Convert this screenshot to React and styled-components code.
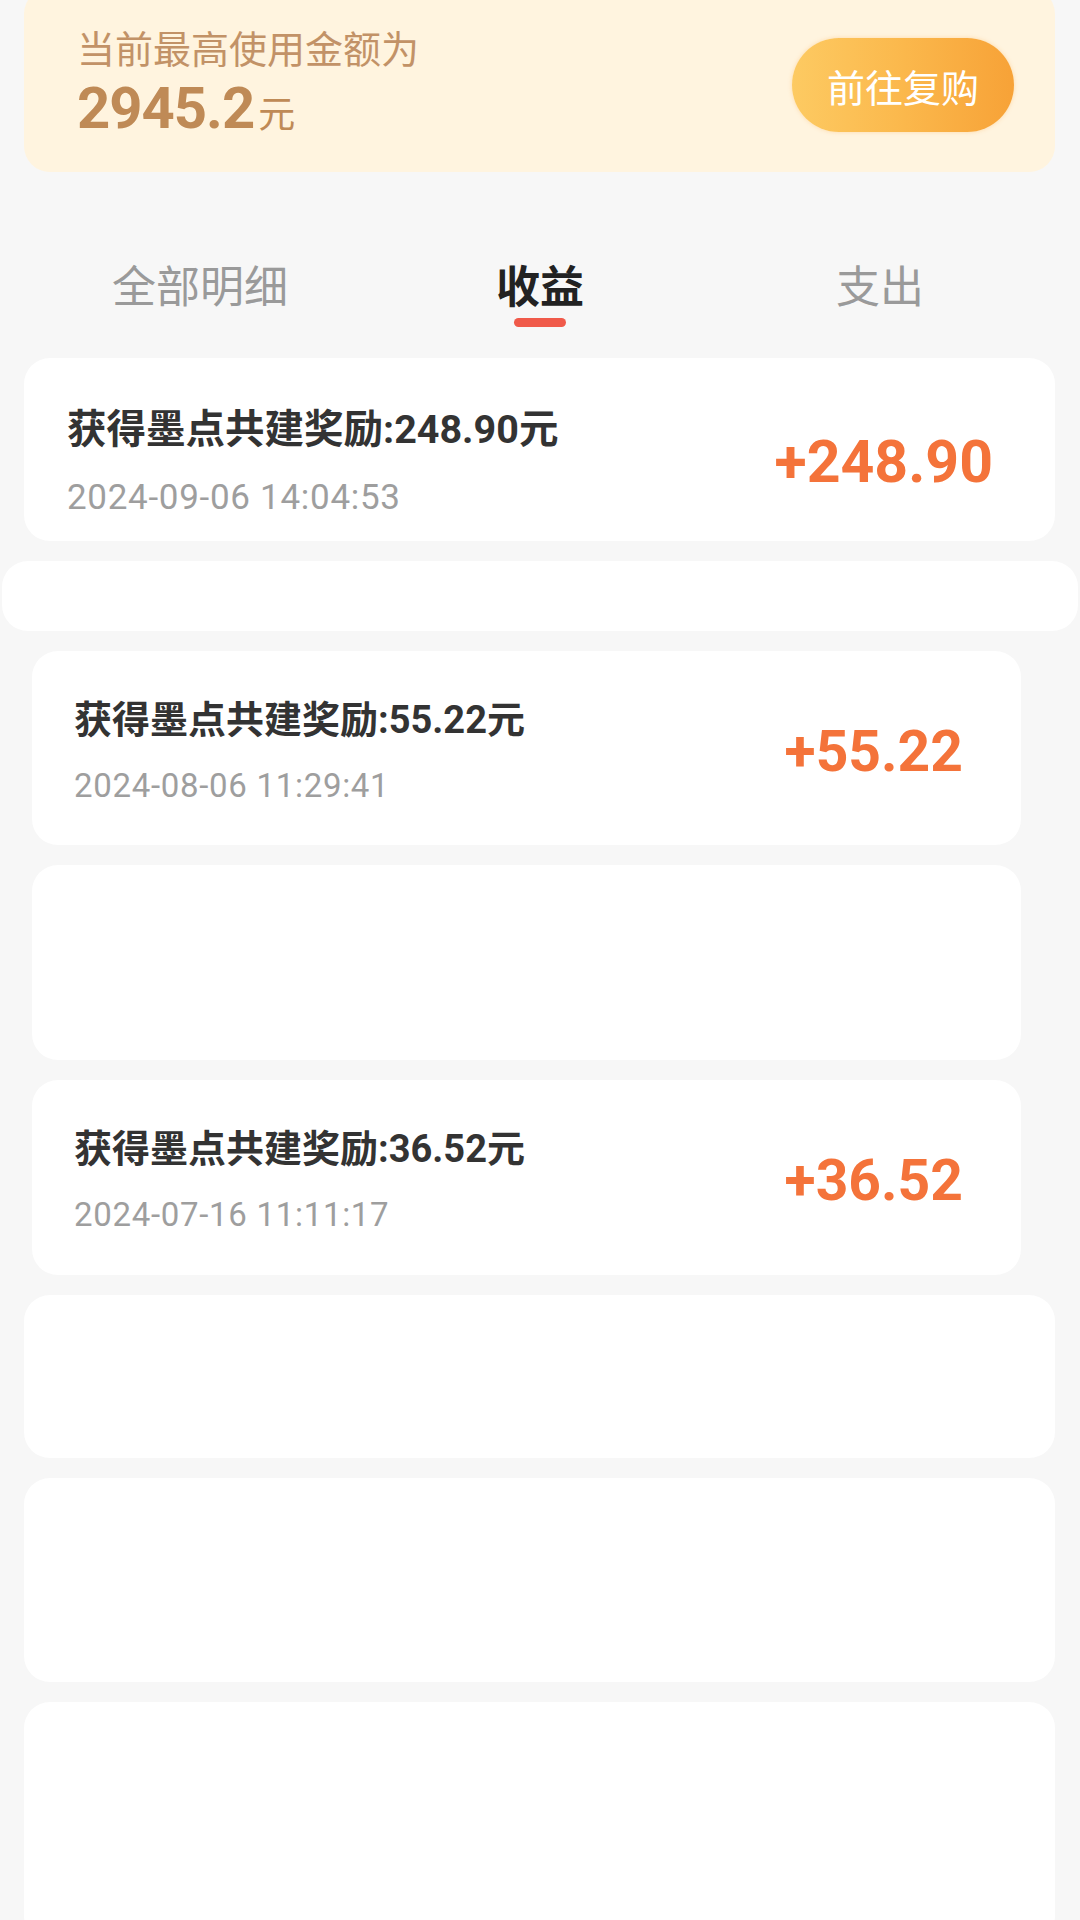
import styled, { createGlobalStyle } from "styled-components";

const GlobalStyle = createGlobalStyle`
	html, body {
		margin: 0;
		padding: 0;
		background: #f7f7f7;
	}
	body {
		width: 1080px;
		min-height: 1920px;
		overflow: hidden;
		font-family: Roboto, "Noto Sans CJK SC", sans-serif;
	}
`;

const Page = styled.div`
	width: 1080px;
	height: 1920px;
	overflow: hidden;
	background: #f7f7f7;
`;

const Banner = styled.div`
	margin: -12px 25px 0 24px;
	height: 184px;
	box-sizing: border-box;
	padding: 0 41px 0 53px;
	background: #fff4df;
	border-radius: 26px;
	display: flex;
	align-items: flex-start;
	justify-content: space-between;
`;

const Quota = styled.div`
	display: flex;
	flex-direction: column;
	margin-top: 36px;
	color: #c29267;
`;

const QuotaLabel = styled.div`
	font-family: "Noto Sans CJK SC", sans-serif;
	font-size: 38px;
	line-height: 46px;
`;

const QuotaValue = styled.div`
	display: flex;
	align-items: baseline;
	margin-top: 5px;
	color: #bf8a56;
	font-size: 58px;
	font-weight: 700;
	line-height: 66px;
	letter-spacing: -1px;
`;

const Unit = styled.span`
	font-family: "Noto Sans CJK SC", sans-serif;
	font-size: 37px;
	font-weight: 400;
	margin-left: 4px;
`;

const RebuyButton = styled.button`
	width: 222px;
	height: 94px;
	margin-top: 50px;
	border: none;
	border-radius: 47px;
	background: linear-gradient(90deg, #fdca62 0%, #fbb84c 50%, #f7a237 100%);
	box-shadow: 0 0 4px rgba(248, 170, 70, 0.35);
	color: #fff;
	font-family: "Noto Sans CJK SC", sans-serif;
	font-size: 38px;
	padding: 0;
`;

const Tabs = styled.div`
	display: flex;
	padding: 86px 30px 0;
`;

const Tab = styled.div`
	flex: 1;
	display: flex;
	flex-direction: column;
	align-items: center;
	font-family: "Noto Sans CJK SC", sans-serif;
	font-size: 44px;
	line-height: 52px;
	color: ${(p) => (p.$active ? "#222" : "#9a9a9a")};
	font-weight: ${(p) => (p.$active ? 700 : 400)};
`;

const Underline = styled.span`
	width: 52px;
	height: 9px;
	margin-top: 8px;
	border-radius: 5px;
	background: ${(p) => (p.$show ? "#f05a4a" : "transparent")};
`;

const List = styled.div`
	display: flex;
	flex-direction: column;
	gap: 20px;
	margin-top: 31px;
`;

const Card = styled.div`
	margin: 0 ${(p) => p.$right}px 0 ${(p) => p.$left}px;
	height: ${(p) => p.$h}px;
	background: #fff;
	border-radius: 26px;
	overflow: hidden;
`;

const Row = styled.div`
	height: ${(p) => p.$rowH}px;
	box-sizing: border-box;
	padding: 0 ${(p) => p.$padR}px 0 ${(p) => p.$padL}px;
	display: flex;
	align-items: center;
	justify-content: space-between;
`;

const Info = styled.div`
	display: flex;
	flex-direction: column;
	gap: ${(p) => p.$gap}px;
`;

const Title = styled.div`
	font-size: ${(p) => p.$size}px;
	line-height: ${(p) => Math.round(p.$size + 8)}px;
	font-weight: 700;
	color: #333;
`;

const Time = styled.div`
	font-size: ${(p) => p.$size}px;
	line-height: ${(p) => p.$size + 6}px;
	letter-spacing: 0.7px;
	color: #9e9e9e;
`;

const Amount = styled.div`
	font-size: ${(p) => p.$size}px;
	font-weight: 700;
	color: #f4733a;
`;

const big = { title: 39.5, time: 35, amount: 59, gap: 23, padL: 43, padR: 62 };
const small = { title: 38, time: 33, amount: 57, gap: 23, padL: 42, padR: 58 };

const cards = [
	{ id: 1, left: 24, right: 25, h: 183, rowH: 207, size: big, title: "获得墨点共建奖励:248.90元", time: "2024-09-06 14:04:53", amount: "+248.90" },
	{ id: 2, left: 2, right: 2, h: 70 },
	{ id: 3, left: 32, right: 59, h: 194, rowH: 200, size: small, title: "获得墨点共建奖励:55.22元", time: "2024-08-06 11:29:41", amount: "+55.22" },
	{ id: 4, left: 32, right: 59, h: 195 },
	{ id: 5, left: 32, right: 59, h: 195, rowH: 200, size: small, title: "获得墨点共建奖励:36.52元", time: "2024-07-16 11:11:17", amount: "+36.52" },
	{ id: 6, left: 24, right: 25, h: 163 },
	{ id: 7, left: 24, right: 25, h: 204 },
	{ id: 8, left: 24, right: 25, h: 240 },
];

function RecordCard({ card }) {
	const { left, right, h, rowH, size, title, time, amount } = card;
	return (
		<Card $left={left} $right={right} $h={h}>
			{title && (
				<Row $rowH={rowH} $padL={size.padL} $padR={size.padR}>
					<Info $gap={size.gap}>
						<Title $size={size.title}>{title}</Title>
						<Time $size={size.time}>{time}</Time>
					</Info>
					<Amount $size={size.amount}>{amount}</Amount>
				</Row>
			)}
		</Card>
	);
}

export default function App() {
	const tabs = ["全部明细", "收益", "支出"];
	return (
		<Page>
			<GlobalStyle />
			<Banner>
				<Quota>
					<QuotaLabel>当前最高使用金额为</QuotaLabel>
					<QuotaValue>
						2945.2<Unit>元</Unit>
					</QuotaValue>
				</Quota>
				<RebuyButton>前往复购</RebuyButton>
			</Banner>

			<Tabs>
				{tabs.map((t) => (
					<Tab key={t} $active={t === "收益"}>
						{t}
						<Underline $show={t === "收益"} />
					</Tab>
				))}
			</Tabs>

			<List>
				{cards.map((c) => (
					<RecordCard key={c.id} card={c} />
				))}
			</List>
		</Page>
	);
}
